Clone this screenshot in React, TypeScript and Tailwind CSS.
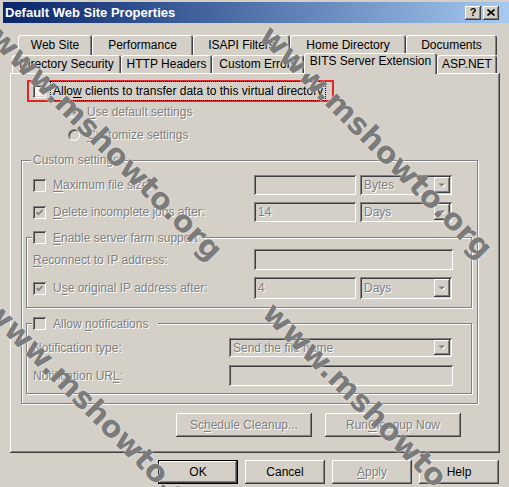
import React from 'react';

const raised =
  'shadow-[inset_-1px_-1px_#404040,inset_1px_1px_#fff,inset_-2px_-2px_#808080,inset_2px_2px_#d4d0c8]';
const sunken =
  'shadow-[inset_1px_1px_#808080,inset_-1px_-1px_#fff,inset_2px_2px_#404040,inset_-2px_-2px_#d4d0c8]';
const dis = 'text-[#808080] [text-shadow:1px_1px_0_#fff]';
const etched = 'border border-[#808080] shadow-[inset_1px_1px_#fff,1px_1px_#fff]';

const Check: React.FC<{ checked?: boolean; disabled?: boolean }> = ({ checked, disabled }) => (
  <div
    className={`w-[13px] h-[13px] shrink-0 flex items-center justify-center ${sunken} ${
      disabled ? 'bg-[#d4d0c8]' : 'bg-[#f4f3f0]'
    }`}
  >
    {checked && (
      <svg width="7" height="7" viewBox="0 0 7 7">
        <polyline points="0.5,3 2.5,5.2 6.5,1" fill="none" stroke={disabled ? '#808080' : '#000'} strokeWidth="1.7" />
      </svg>
    )}
  </div>
);

const Radio: React.FC<{ on?: boolean }> = ({ on }) => (
  <div className="w-[12px] h-[12px] shrink-0 rounded-full border border-t-[#808080] border-l-[#808080] border-r-white border-b-white bg-[#d4d0c8] flex items-center justify-center shadow-[inset_1px_1px_#404040]">
    {on && <div className="w-[4px] h-[4px] rounded-full bg-[#808080]" />}
  </div>
);

const Arrow = () => (
  <div className={`w-[16px] h-full bg-[#d4d0c8] flex items-center justify-center ${raised}`}>
    <svg width="8" height="5" viewBox="0 0 8 5">
      <polygon points="1.5,1.5 8,1.5 4.75,4.75" fill="#fff" />
      <polygon points="0.5,0.5 7,0.5 3.75,3.75" fill="#808080" />
    </svg>
  </div>
);

const Edit: React.FC<{ w: string; h?: string; value?: string }> = ({ w, h = 'h-[20px]', value }) => (
  <div className={`${w} ${h} ${sunken} bg-[#d4d0c8] flex items-center pl-[4px] ${dis}`}>{value}</div>
);

const Combo: React.FC<{ w: string; h?: string; value: string }> = ({ w, h = 'h-[20px]', value }) => (
  <div className={`${w} ${h} ${sunken} bg-[#d4d0c8] flex items-stretch p-[2px]`}>
    <div className={`flex-1 flex items-center pl-[2px] ${dis}`}>{value}</div>
    <Arrow />
  </div>
);

const Btn: React.FC<{ w: string; disabled?: boolean; def?: boolean; children: React.ReactNode }> = ({
  w,
  disabled,
  def,
  children,
}) => (
  <div
    className={`${w} h-[24px] bg-[#d4d0c8] flex items-center justify-center ${
      def
        ? 'shadow-[inset_0_0_0_1px_#000,inset_-2px_-2px_#404040,inset_2px_2px_#fff,inset_-3px_-3px_#808080]'
        : raised
    } ${disabled ? dis : 'text-black'}`}
  >
    {children}
  </div>
);

const Tab: React.FC<{ w: string; label: string; active?: boolean }> = ({ w, label, active }) => (
  <div
    className={`${w} flex justify-center rounded-t-[3px] bg-[#d4d0c8] shadow-[inset_1px_1px_#fff,inset_-1px_0_#404040,inset_-2px_0_#808080] ${
      active ? 'h-[21px] -mb-[1px] pt-[2px] relative z-10' : 'h-full items-center'
    }`}
  >
    {label}
  </div>
);

const U: React.FC<{ children: React.ReactNode }> = ({ children }) => <span className="underline underline-offset-2">{children}</span>;

// diagonal site watermark laid over the screenshot
const Mark: React.FC<{ pos: string }> = ({ pos }) => (
  <div
    className={`absolute ${pos} -translate-x-1/2 -translate-y-1/2 rotate-[45deg] whitespace-nowrap pointer-events-none font-['DejaVu_Sans',sans-serif] font-bold text-[30px] text-[#7b7b7b] [text-shadow:0_0_2px_#ececec]`}
  >
    www.mshowto.org
  </div>
);

export default function App() {
  return (
    <div className="relative w-[509px] h-[487px] overflow-hidden bg-[#d4d0c8] text-black text-[12px] leading-none font-['Liberation_Sans',Arial,sans-serif]">
      {/* title bar */}
      <div className="mt-[2px] ml-[3px] h-[21px] bg-gradient-to-r from-[#0a246a] to-[#a6caf0] flex items-center pl-[2px] pr-[10px]">
        <span className="text-white font-bold text-[13px] flex-1">Default Web Site Properties</span>
        <div className={`w-[16px] h-[14px] bg-[#d4d0c8] ${raised} flex items-center justify-center font-bold text-[11px]`}>?</div>
        <div className={`ml-[2px] w-[16px] h-[14px] bg-[#d4d0c8] ${raised} flex items-center justify-center`}>
          <svg width="8" height="7" viewBox="0 0 8 7">
            <path d="M0.5 0.5 L7.5 6.5 M7.5 0.5 L0.5 6.5" stroke="#000" strokeWidth="1.6" />
          </svg>
        </div>
      </div>

      {/* tabs */}
      <div className="mt-[12px] ml-[18px] flex h-[20px]">
        <Tab w="w-[74px]" label="Web Site" />
        <Tab w="w-[101px]" label="Performance" />
        <Tab w="w-[97px]" label="ISAPI Filters" />
        <Tab w="w-[116px]" label="Home Directory" />
        <Tab w="w-[91px]" label="Documents" />
      </div>
      <div className="ml-[12px] flex items-end h-[18px]">
        <Tab w="w-[109px]" label="Directory Security" />
        <Tab w="w-[91px]" label="HTTP Headers" />
        <Tab w="w-[92px]" label="Custom Errors" />
        <Tab w="w-[133px]" label="BITS Server Extension" active />
        <Tab w="w-[60px]" label="ASP.NET" />
      </div>

      {/* panel */}
      <div className={`ml-[10px] w-[490px] h-[380px] flex flex-col ${raised}`}>
        <div className="mt-[7px] ml-[17px] w-[307px] h-[22px] border-2 border-[#e0262b] flex items-center pl-[4px]">
          <Check />
          <span className="ml-[4px] px-[2px] py-[3px] border border-dotted border-black">
            Allo<U>w</U> clients to transfer data to this virtual directory
          </span>
        </div>
        <div className="mt-[1px] ml-[58px] h-[18px] flex items-center gap-[7px]">
          <Radio on />
          <span className={dis}>
            <U>U</U>se default settings
          </span>
        </div>
        <div className="mt-[5px] ml-[58px] h-[18px] flex items-center gap-[7px]">
          <Radio />
          <span className={dis}>
            <U>C</U>ustomize settings
          </span>
        </div>

        {/* custom settings */}
        <div className={`relative mt-[16px] ml-[11px] w-[457px] h-[244px] pt-[14px] pl-[4px] ${etched}`}>
          <span className={`absolute -top-[7px] left-[9px] px-[2px] bg-[#d4d0c8] ${dis}`}>Custom settings</span>

          <div className="flex items-center h-[20px] pl-[7px]">
            <div className="w-[221px] flex items-center gap-[7px]">
              <Check disabled />
              <span className={dis}>
                <U>M</U>aximum file size:
              </span>
            </div>
            <Edit w="w-[102px]" />
            <div className="w-[4px]" />
            <Combo w="w-[92px]" value="Bytes" />
          </div>
          <div className="mt-[7px] flex items-center h-[20px] pl-[7px]">
            <div className="w-[221px] flex items-center gap-[7px]">
              <Check checked disabled />
              <span className={dis}>
                <U>D</U>elete incomplete jobs after:
              </span>
            </div>
            <Edit w="w-[102px]" value="14" />
            <div className="w-[4px]" />
            <Combo w="w-[92px]" value="Days" />
          </div>

          {/* server farm */}
          <div className={`relative mt-[15px] w-[446px] h-[71px] pt-[11px] pl-[6px] ${etched}`}>
            <div className="absolute -top-[7px] left-[5px] px-[1px] pr-[3px] bg-[#d4d0c8] flex items-center gap-[7px]">
              <Check disabled />
              <span className={dis}>
                <U>E</U>nable server farm support
              </span>
            </div>
            <div className="flex items-center h-[21px]">
              <div className={`w-[221px] ${dis}`}>
                <U>R</U>econnect to IP address:
              </div>
              <Edit w="w-[199px]" h="h-[21px]" />
            </div>
            <div className="mt-[7px] flex items-center h-[22px]">
              <div className="w-[221px] flex items-center gap-[7px]">
                <Check checked disabled />
                <span className={dis}>
                  U<U>s</U>e original IP address after:
                </span>
              </div>
              <Edit w="w-[102px]" h="h-[22px]" value="4" />
              <div className="w-[4px]" />
              <Combo w="w-[92px]" h="h-[22px]" value="Days" />
            </div>
          </div>

          {/* notifications */}
          <div className={`relative mt-[15px] w-[446px] h-[71px] pt-[14px] pl-[6px] ${etched}`}>
            <div className="absolute -top-[7px] left-[5px] px-[1px] pr-[10px] bg-[#d4d0c8] flex items-center gap-[7px]">
              <Check disabled />
              <span className={dis}>
                Allow <U>n</U>otifications
              </span>
            </div>
            <div className="flex items-center h-[19px]">
              <div className={`w-[196px] ${dis}`}>
                <U>N</U>otification type:
              </div>
              <Combo w="w-[223px]" h="h-[19px]" value="Send the file name" />
            </div>
            <div className="mt-[8px] flex items-center h-[21px]">
              <div className={`w-[196px] ${dis}`}>
                Notification UR<U>L</U>:
              </div>
              <Edit w="w-[224px]" h="h-[21px]" />
            </div>
          </div>
        </div>

        <div className="mt-[9px] flex justify-end gap-[13px] pr-[39px]">
          <Btn w="w-[136px]" disabled>
            Sc<U>h</U>edule Cleanup...
          </Btn>
          <Btn w="w-[136px]" disabled>
            Run <U>C</U>leanup Now
          </Btn>
        </div>
      </div>

      {/* dialog buttons */}
      <div className="mt-[7px] flex justify-end gap-[7px] pr-[10px]">
        <Btn w="w-[80px]" def>
          OK
        </Btn>
        <Btn w="w-[80px]">Cancel</Btn>
        <Btn w="w-[80px]" disabled>
          <U>A</U>pply
        </Btn>
        <Btn w="w-[80px]">Help</Btn>
      </div>

      <Mark pos="left-[106px] top-[144px]" />
      <Mark pos="left-[376px] top-[142px]" />
      <Mark pos="left-[101px] top-[416px]" />
      <Mark pos="left-[379px] top-[419px]" />
    </div>
  );
}
